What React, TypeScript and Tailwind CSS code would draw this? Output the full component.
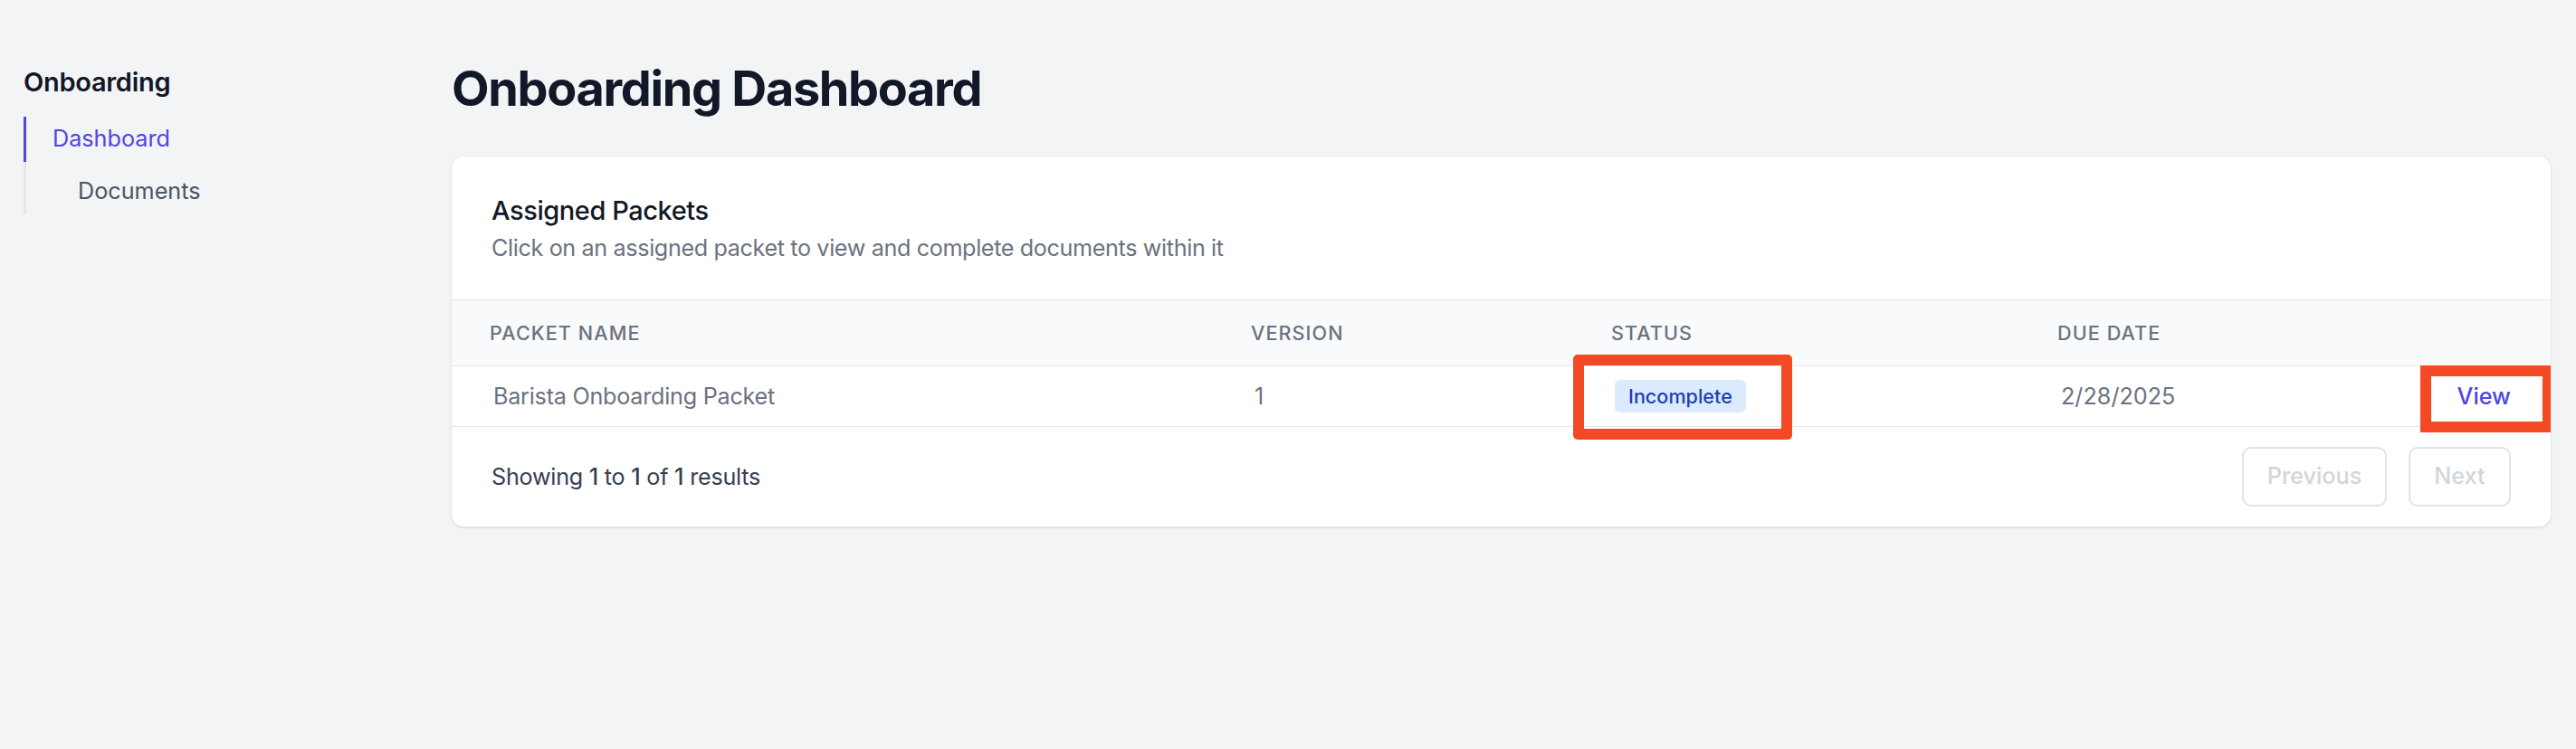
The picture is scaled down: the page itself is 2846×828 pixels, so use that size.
import React from 'react'

type Packet = {
  name: string
  version: number
  status: string
  dueDate: string
}

const packets: Packet[] = [
  {
    name: 'Barista Onboarding Packet',
    version: 1,
    status: 'Incomplete',
    dueDate: '2/28/2025'
  }
]

const columns = ['Packet Name', 'Version', 'Status', 'Due Date', '']

const Sidebar = () => (
  <aside className="w-[499px] shrink-0 pl-[26px] pt-[69px]">
    <h2 className="text-[29px] leading-[43px] font-semibold tracking-[-0.01em] text-[#111827]">
      Onboarding
    </h2>
    <ul className="mt-[17px] flex flex-col gap-[8px] border-l-[3px] border-[#e5e7eb]">
      <li className="-ml-[3px] flex h-[50px] items-center border-l-[3px] border-[#4f46e5] pl-[29px] text-[25.2px] text-[#4f46e5]">
        Dashboard
      </li>
      <li className="flex h-[50px] items-center pl-[57px] text-[25.2px] text-[#4b5563]">
        Documents
      </li>
    </ul>
  </aside>
)

const PacketsCard = () => (
  <div className="overflow-hidden rounded-[13px] bg-white shadow-[0_1px_3px_rgba(0,0,0,0.12),0_1px_2px_rgba(0,0,0,0.06)] ring-1 ring-[#e5e7eb]/60">
    <div className="px-[44px] pt-[38px] pb-[39px]">
      <h3 className="text-[29px] leading-[43px] font-medium tracking-[-0.015em] text-[#111827]">
        Assigned Packets
      </h3>
      <p className="mt-[2px] text-[25.2px] leading-[36px] tracking-[-0.015em] text-[#6b7280]">
        Click on an assigned packet to view and complete documents within it
      </p>
    </div>

    <div className="grid grid-cols-[841px_398px_493px_444px_1fr]">
      {columns.map((col, i) => (
        <div
          key={i}
          className="border-t border-[#e5e7eb] bg-[#f9fafb] pt-[22px] pb-[21px] pl-[42px] text-[21.6px] leading-[29px] font-medium tracking-wider text-[#6b7280] uppercase"
        >
          {col}
        </div>
      ))}

      {packets.map(p => (
        <React.Fragment key={p.name}>
          <div className="flex items-center border-t border-[#e5e7eb] py-[15px] pl-[46px] text-[25.2px] leading-[36px] tracking-[-0.01em] text-[#6b7280]">
            {p.name}
          </div>
          <div className="flex items-center border-t border-[#e5e7eb] py-[15px] pl-[46px] text-[25.2px] leading-[36px] text-[#6b7280]">
            {p.version}
          </div>
          <div className="flex items-center border-t border-[#e5e7eb] py-[15px] pl-[46px]">
            <span className="relative inline-flex rounded-[6px] bg-[#dbeafe] px-[15px] py-[3.6px] text-[21.6px] leading-[29px] font-medium text-[#1e40af]">
              {p.status}
              <span className="absolute -top-[28px] -right-[51px] -bottom-[30px] -left-[46px] rounded-[5px] border-[12px] border-[#f34a25]" />
            </span>
          </div>
          <div className="flex items-center border-t border-[#e5e7eb] py-[15px] pl-[46px] text-[25.2px] leading-[36px] text-[#6b7280]">
            {p.dueDate}
          </div>
          <div className="flex items-center justify-end border-t border-[#e5e7eb] py-[15px] pr-[44px] text-[25.2px] leading-[36px]">
            <span className="relative font-medium text-[#4f46e5]">
              View
              <span className="absolute -top-[16px] -right-[47px] -bottom-[22px] -left-[41px] border-[12px] border-[#f34a25]" />
            </span>
          </div>
        </React.Fragment>
      ))}
    </div>

    <div className="flex items-center justify-between border-t border-[#e5e7eb] px-[44px] py-[22px]">
      <p className="text-[25.2px] leading-[36px] tracking-[-0.01em] text-[#374151]">
        Showing <span className="font-medium">1</span> to{' '}
        <span className="font-medium">1</span> of{' '}
        <span className="font-medium">1</span> results
      </p>
      <div className="flex gap-[24px]">
        <button
          disabled
          className="flex h-[66px] w-[160px] items-center justify-center rounded-[10px] border-2 border-[#e1e3e8] text-[25.2px] font-medium text-[#d1d5db]"
        >
          Previous
        </button>
        <button
          disabled
          className="flex h-[66px] w-[113px] items-center justify-center rounded-[10px] border-2 border-[#e1e3e8] text-[25.2px] font-medium text-[#d1d5db]"
        >
          Next
        </button>
      </div>
    </div>
  </div>
)

export default function App() {
  return (
    <div className="flex min-h-[828px] w-full bg-[#f3f4f6] font-['Inter',sans-serif]">
      <Sidebar />
      <main className="flex-1 pt-[65px] pr-[28px]">
        <h1 className="mb-[43px] text-[54px] leading-[65px] font-bold tracking-[-0.025em] text-[#111827]">
          Onboarding Dashboard
        </h1>
        <PacketsCard />
      </main>
    </div>
  )
}
